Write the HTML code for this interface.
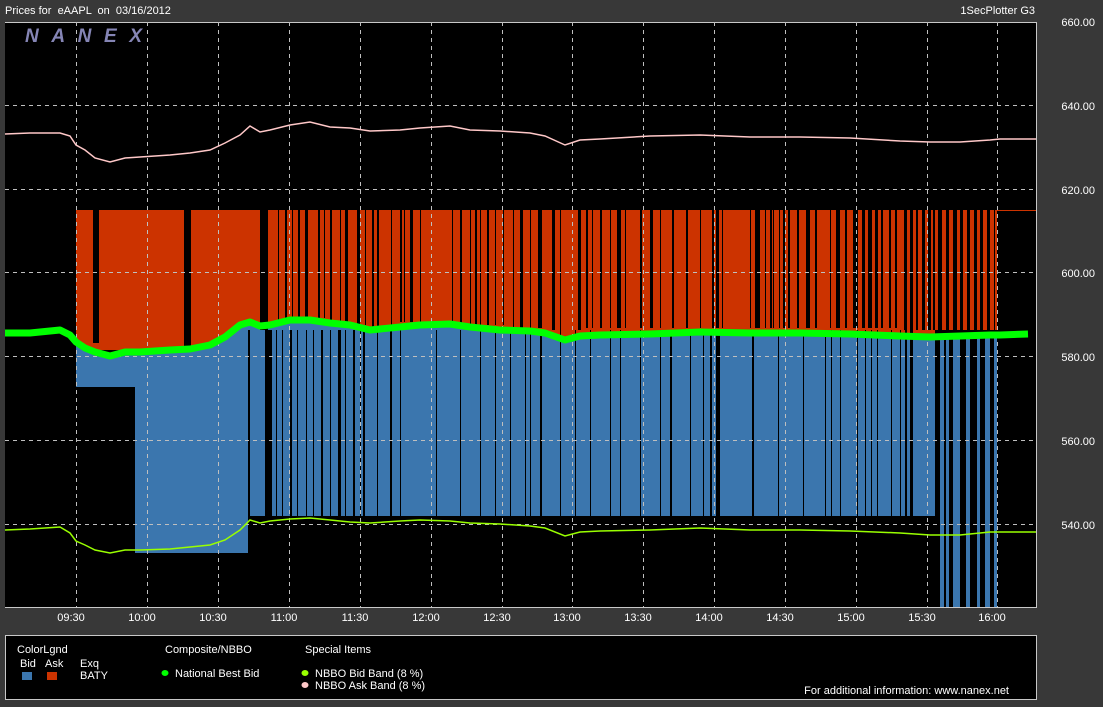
<!DOCTYPE html>
<html><head><meta charset="utf-8"><style>
html,body{margin:0;padding:0;background:#383838;width:1103px;height:707px;overflow:hidden;font-family:"Liberation Sans",sans-serif;}
svg{display:block}
text{font-family:"Liberation Sans",sans-serif;font-size:11px;fill:#fff;white-space:pre}
</style></head><body>
<svg width="1103" height="707" viewBox="0 0 1103 707" xml:space="preserve">
<rect width="1103" height="707" fill="#383838"/>
<text x="5" y="14">Prices for  eAAPL  on  03/16/2012</text>
<text x="1035" y="14" text-anchor="end">1SecPlotter G3</text>
<rect x="5" y="22" width="1031" height="585" fill="#000"/>
<path d="M5 22.5H1036.5V607.5H5" fill="none" stroke="#c8c8c8" stroke-width="1"/>
<rect x="76" y="210" width="921" height="140" fill="#cc3300"/>
<rect x="997" y="210" width="39" height="1" fill="#cc3300"/>
<polygon fill="#3b76ae" points="76,340 90,348 110,355 135,353 150,352 180,350 210,345 230,335 250,322 265,327 265,516 935,516 935,340 997,340 997,516 248,516 248,553 135,553 135,387 76,387"/>
<polygon fill="#3b76ae" points="265,327 290,322 310,320 350,325 375,330 420,325 460,327 500,330 540,333 565,340 600,335 700,333 800,332 900,334 935,336 935,516 265,516"/>
<rect x="248" y="330" width="19" height="186" fill="#000"/>
<rect x="250" y="330" width="15" height="186" fill="#3b76ae"/>
<g fill="#000">
<rect x="93" y="210" width="6" height="133"/><rect x="184" y="210" width="7" height="139"/><rect x="260" y="210" width="8" height="120"/>
<rect x="278" y="210" width="1" height="115"/><rect x="285" y="210" width="2" height="110"/><rect x="292" y="210" width="1" height="110"/><rect x="298" y="210" width="2" height="110"/><rect x="305" y="210" width="3" height="108"/><rect x="318" y="210" width="2" height="108"/><rect x="324" y="210" width="1" height="108"/><rect x="330" y="210" width="2" height="112"/><rect x="340" y="210" width="1" height="112"/><rect x="345" y="210" width="3" height="114"/><rect x="357" y="210" width="3" height="115"/><rect x="365" y="210" width="1" height="115"/><rect x="372" y="210" width="2" height="118"/><rect x="377" y="210" width="2" height="118"/><rect x="391" y="210" width="1" height="115"/><rect x="400" y="210" width="2" height="112"/><rect x="404" y="210" width="1" height="112"/><rect x="410" y="210" width="3" height="112"/><rect x="420" y="210" width="1" height="112"/><rect x="452" y="210" width="1" height="112"/><rect x="460" y="210" width="2" height="115"/><rect x="470" y="210" width="1" height="115"/><rect x="475" y="210" width="2" height="115"/><rect x="480" y="210" width="1" height="115"/><rect x="487" y="210" width="2" height="115"/><rect x="495" y="210" width="1" height="115"/><rect x="503" y="210" width="1" height="115"/><rect x="513" y="210" width="1" height="118"/><rect x="520" y="210" width="3" height="118"/><rect x="530" y="210" width="1" height="118"/><rect x="538" y="210" width="4" height="118"/><rect x="552" y="210" width="3" height="120"/><rect x="560" y="210" width="1" height="125"/><rect x="578" y="210" width="3" height="120"/><rect x="586" y="210" width="2" height="118"/><rect x="592" y="210" width="1" height="118"/><rect x="600" y="210" width="2" height="118"/><rect x="610" y="210" width="1" height="118"/><rect x="617" y="210" width="4" height="118"/><rect x="625" y="210" width="1" height="118"/><rect x="640" y="210" width="2" height="118"/><rect x="650" y="210" width="3" height="118"/><rect x="660" y="210" width="1" height="118"/><rect x="672" y="210" width="2" height="118"/><rect x="686" y="210" width="2" height="118"/><rect x="700" y="210" width="1" height="118"/><rect x="712" y="210" width="2" height="118"/><rect x="716" y="210" width="3" height="118"/><rect x="722" y="210" width="1" height="118"/><rect x="750" y="210" width="1" height="118"/><rect x="755" y="210" width="5" height="118"/><rect x="765" y="210" width="1" height="118"/><rect x="770" y="210" width="2" height="118"/><rect x="773" y="210" width="1" height="118"/><rect x="779" y="210" width="1" height="118"/><rect x="783" y="210" width="2" height="118"/><rect x="788" y="210" width="2" height="118"/><rect x="797" y="210" width="2" height="118"/><rect x="806" y="210" width="4" height="118"/><rect x="815" y="210" width="2" height="118"/><rect x="830" y="210" width="1" height="118"/><rect x="836" y="210" width="4" height="118"/><rect x="845" y="210" width="2" height="118"/><rect x="853" y="210" width="5" height="118"/><rect x="862" y="210" width="3" height="118"/><rect x="868" y="210" width="4" height="118"/><rect x="875" y="210" width="3" height="118"/><rect x="881" y="210" width="2" height="118"/><rect x="889" y="210" width="2" height="118"/><rect x="895" y="210" width="2" height="118"/><rect x="904" y="210" width="3" height="120"/><rect x="910" y="210" width="3" height="120"/><rect x="916" y="210" width="2" height="120"/><rect x="922" y="210" width="3" height="120"/><rect x="928" y="210" width="3" height="120"/><rect x="933" y="210" width="2" height="120"/><rect x="938" y="210" width="4" height="120"/><rect x="946" y="210" width="3" height="120"/><rect x="953" y="210" width="4" height="120"/><rect x="960" y="210" width="3" height="120"/><rect x="967" y="210" width="3" height="120"/><rect x="974" y="210" width="3" height="120"/><rect x="980" y="210" width="3" height="120"/><rect x="987" y="210" width="3" height="120"/><rect x="994" y="210" width="1" height="120"/>
<rect x="267" y="330" width="5" height="186"/><rect x="276" y="330" width="1" height="186"/><rect x="282" y="330" width="1" height="186"/><rect x="290" y="330" width="2" height="186"/><rect x="297" y="330" width="1" height="186"/><rect x="306" y="330" width="1" height="186"/><rect x="313" y="330" width="1" height="186"/><rect x="321" y="330" width="2" height="186"/><rect x="330" y="330" width="1" height="186"/><rect x="338" y="330" width="3" height="186"/><rect x="345" y="330" width="1" height="186"/><rect x="353" y="330" width="2" height="186"/><rect x="360" y="330" width="1" height="186"/><rect x="363" y="330" width="2" height="186"/><rect x="377" y="330" width="1" height="186"/><rect x="390" y="330" width="2" height="186"/><rect x="400" y="330" width="1" height="186"/><rect x="436" y="330" width="1" height="186"/><rect x="460" y="330" width="1" height="186"/><rect x="480" y="330" width="1" height="186"/><rect x="495" y="330" width="1" height="186"/><rect x="510" y="330" width="1" height="186"/><rect x="525" y="330" width="1" height="186"/><rect x="530" y="330" width="1" height="186"/><rect x="540" y="330" width="2" height="186"/><rect x="560" y="330" width="1" height="186"/><rect x="575" y="330" width="1" height="186"/><rect x="590" y="330" width="1" height="186"/><rect x="610" y="330" width="1" height="186"/><rect x="620" y="330" width="1" height="186"/><rect x="640" y="330" width="1" height="186"/><rect x="660" y="330" width="1" height="186"/><rect x="670" y="330" width="2" height="186"/><rect x="690" y="330" width="1" height="186"/><rect x="703" y="330" width="1" height="186"/><rect x="710" y="330" width="2" height="186"/><rect x="716" y="330" width="4" height="186"/><rect x="752" y="330" width="2" height="186"/><rect x="778" y="330" width="1" height="186"/><rect x="803" y="330" width="1" height="186"/><rect x="825" y="330" width="1" height="186"/><rect x="831" y="330" width="1" height="186"/><rect x="840" y="330" width="1" height="186"/><rect x="857" y="330" width="1" height="186"/><rect x="865" y="330" width="1" height="186"/><rect x="871" y="330" width="1" height="186"/><rect x="877" y="330" width="1" height="186"/><rect x="891" y="330" width="1" height="186"/><rect x="900" y="330" width="1" height="186"/><rect x="905" y="330" width="2" height="186"/><rect x="910" y="330" width="3" height="186"/>
<rect x="935" y="330" width="62" height="186"/>
</g>
<g fill="#3b76ae">
<rect x="940" y="335" width="4" height="272"/><rect x="946" y="335" width="3" height="272"/><rect x="953" y="335" width="7" height="272"/><rect x="966" y="335" width="4" height="272"/><rect x="977" y="335" width="3" height="272"/><rect x="985" y="335" width="5" height="272"/><rect x="994" y="335" width="3" height="272"/>
</g>
<g stroke="#bfbfbf" stroke-width="1" stroke-dasharray="4,4">
<path d="M76.5 22V607M147.5 22V607M218.5 22V607M289.5 22V607M360.5 22V607M431.5 22V607M502.5 22V607M572.5 22V607M643.5 22V607M714.5 22V607M785.5 22V607M856.5 22V607M927.5 22V607M997.5 22V607"/>
<path d="M5 105.5H1036M5 189.5H1036M5 272.5H1036M5 356.5H1036M5 440.5H1036M5 524.5H1036"/>
</g>
<polyline fill="none" stroke="#ffc8c8" stroke-width="1.5" points="5,134 30,133 60,133 70,136 76,145 85,150 95,158 110,162 125,158 140,157 170,155 190,153 210,150 225,143 240,135 250,126 260,132 270,130 290,125 310,122 330,127 350,128 370,131 400,130 420,128 450,126 470,130 500,131 530,133 545,136 565,145 580,140 600,139 650,136 700,135 750,137 800,137 850,138 900,141 930,142 960,142 990,140 1000,139 1036,139"/>
<polyline fill="none" stroke="#99ff00" stroke-width="1.5" points="5,530 30,529 60,527 70,533 76,541 85,545 95,550 110,553 125,550 140,550 170,549 190,547 210,545 225,540 240,530 250,520 260,523 270,521 290,519 310,518 330,520 350,522 370,523 400,521 420,520 450,521 470,523 500,524 530,526 545,528 565,536 580,532 600,531 650,530 700,528 750,530 800,530 850,531 900,533 930,535 960,535 990,532 1000,532 1036,532"/>
<polyline fill="none" stroke="#00ff00" stroke-width="7" stroke-linejoin="round" points="5,333 30,333 60,330 70,335 76,342 85,348 95,352 110,356 125,352 140,352 170,350 190,349 210,345 225,337 240,325 250,322 260,326 270,325 290,320 310,320 330,323 350,325 370,330 400,327 420,325 450,324 470,327 500,330 530,331 545,333 565,340 580,336 600,335 650,334 700,332 750,333 800,333 850,334 900,336 930,337 960,336 990,335 1000,335 1028,334"/>
<text x="25" y="42" textLength="117" lengthAdjust="spacing" style="font-size:19px;font-weight:bold;font-style:italic;fill:#8585b5">NANEX</text>
<g text-anchor="end">
<text x="1095" y="26">660.00</text><text x="1095" y="110">640.00</text><text x="1095" y="194">620.00</text><text x="1095" y="277">600.00</text><text x="1095" y="361">580.00</text><text x="1095" y="445">560.00</text><text x="1095" y="529">540.00</text>
</g>
<g text-anchor="middle">
<text x="71" y="621">09:30</text><text x="142" y="621">10:00</text><text x="213" y="621">10:30</text><text x="284" y="621">11:00</text><text x="355" y="621">11:30</text><text x="426" y="621">12:00</text><text x="497" y="621">12:30</text><text x="567" y="621">13:00</text><text x="638" y="621">13:30</text><text x="709" y="621">14:00</text><text x="780" y="621">14:30</text><text x="851" y="621">15:00</text><text x="922" y="621">15:30</text><text x="992" y="621">16:00</text>
</g>
<rect x="5.5" y="635.5" width="1031" height="64" fill="#000" stroke="#c8c8c8"/>
<text x="17" y="653">ColorLgnd</text>
<text x="20" y="667">Bid</text><text x="45" y="667">Ask</text><text x="80" y="667">Exq</text>
<rect x="22" y="672" width="10" height="8" fill="#3b76ae"/><rect x="47" y="672" width="10" height="8" fill="#cc3300"/>
<text x="80" y="679">BATY</text>
<text x="165" y="653">Composite/NBBO</text>
<ellipse cx="165" cy="673" rx="3.5" ry="3" fill="#00ff00"/><text x="175" y="677">National Best Bid</text>
<text x="305" y="653">Special Items</text>
<ellipse cx="305" cy="673" rx="3.5" ry="3" fill="#99ff00"/><text x="315" y="677">NBBO Bid Band (8 %)</text>
<ellipse cx="305" cy="685" rx="3.5" ry="3" fill="#ffc8c8"/><text x="315" y="689">NBBO Ask Band (8 %)</text>
<text x="1009" y="694" text-anchor="end">For additional information: www.nanex.net</text>
</svg>
</body></html>
